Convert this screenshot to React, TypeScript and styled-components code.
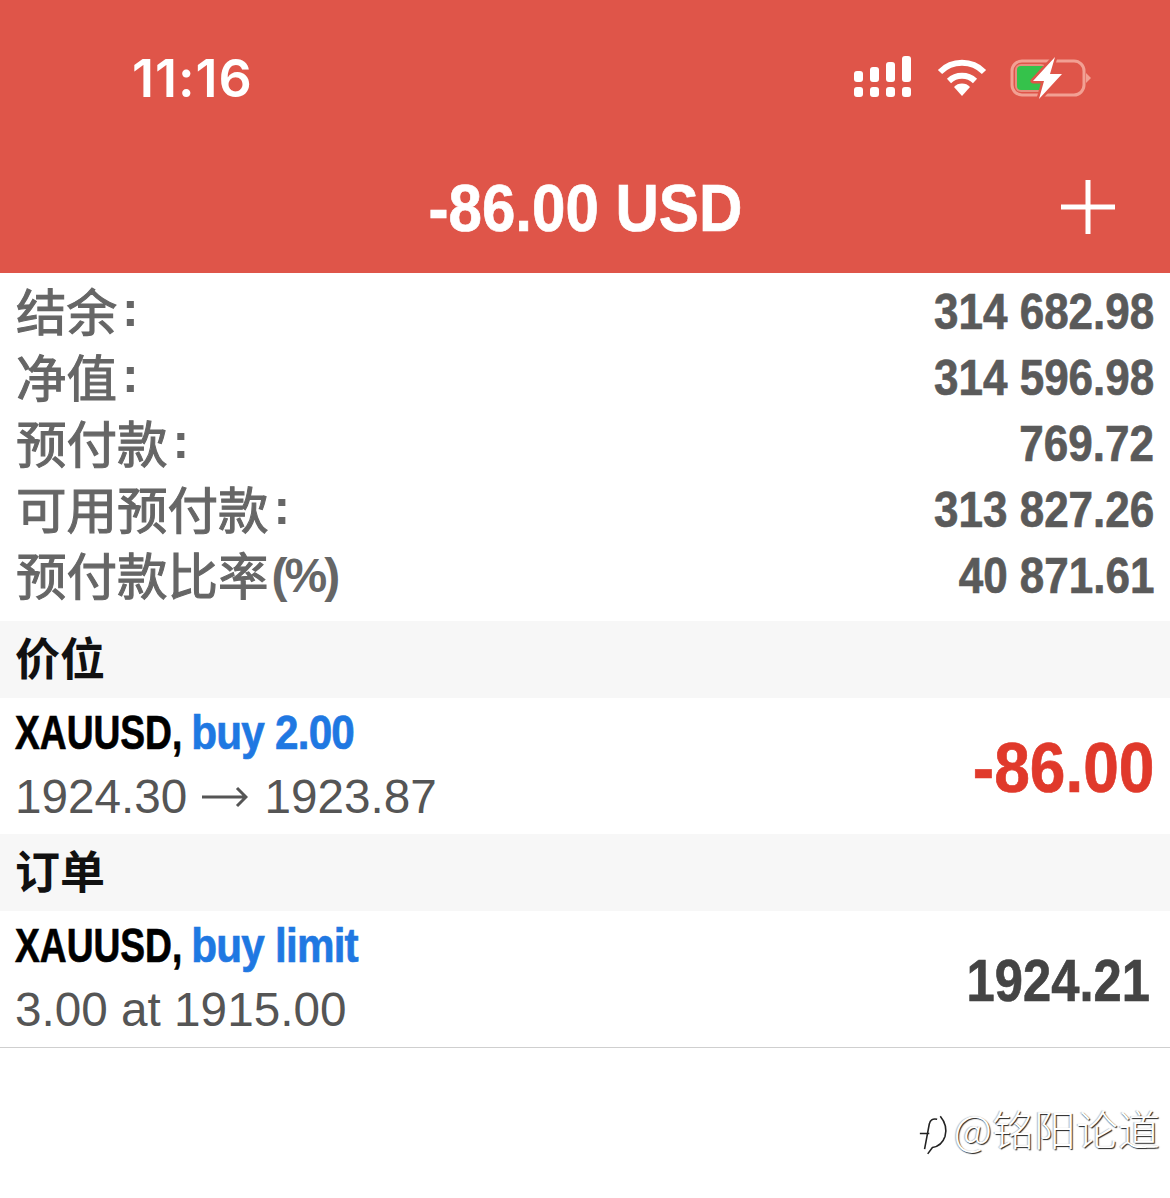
import styled, { createGlobalStyle } from 'styled-components';

const GlobalStyle = createGlobalStyle`
  html, body {
    margin: 0;
    padding: 0;
    background: #fff;
  }
  body {
    font-family: 'Liberation Sans', 'Noto Sans CJK SC', sans-serif;
  }
`;

const Page = styled.div`
  width: 1170px;
  height: 1198px;
  display: flex;
  flex-direction: column;
  overflow: hidden;
  position: relative;
  background: #fff;
`;

const Header = styled.header`
  height: 273px;
  background: #df5549;
  color: #fff;
  display: flex;
  flex-direction: column;
`;

const StatusBar = styled.div`
  height: 156px;
  display: flex;
  align-items: center;
  justify-content: space-between;
  padding: 0 78px 0 132px;
`;

const Clock = styled.span`
  font-size: 52px;
  font-weight: 600;
  font-family: Inter, 'Liberation Sans', sans-serif;
  letter-spacing: 1px;
`;

const StatusIcons = styled.div`
  display: flex;
  align-items: center;
  gap: 23px;
`;

const TitleBar = styled.div`
  flex: 1;
  display: flex;
  align-items: center;
  justify-content: center;
  position: relative;
  padding-bottom: 14px;
`;

const Squeezed = styled.span<{ $scale?: number; $origin?: string }>`
  display: inline-block;
  transform: scaleX(${(p) => p.$scale ?? 0.88});
  transform-origin: ${(p) => p.$origin ?? 'left'} center;
  white-space: nowrap;
  -webkit-text-stroke: 0.7px currentColor;
`;

const Title = styled(Squeezed)`
  font-size: 66px;
  font-weight: 700;
`;

const AddButton = styled.div`
  position: absolute;
  right: 55px;
  top: 24px;
  width: 54px;
  height: 54px;
`;

const Summary = styled.section`
  height: 348px;
  padding-top: 6px;
  box-sizing: border-box;
`;

const SummaryRow = styled.div`
  height: 66px;
  display: flex;
  align-items: center;
  justify-content: space-between;
  padding: 0 16px;
  color: #666;
`;

const SummaryLabel = styled.span`
  font-size: 50.5px;
  line-height: 60px;
  font-weight: 400;
  font-family: 'Noto Sans CJK SC', sans-serif;
  -webkit-text-stroke: 1.1px currentColor;
  margin-top: -6px;
  display: flex;
  align-items: center;
`;

const Colon = styled.span`
  font-family: 'Liberation Sans', sans-serif;
  font-size: 50px;
  font-weight: 700;
  margin-left: 5px;
  -webkit-text-stroke: 0;
`;

const Percent = styled.span`
  font-family: 'Liberation Sans', sans-serif;
  font-size: 48px;
  font-weight: 700;
  letter-spacing: -3px;
  margin-left: 3px;
  position: relative;
  top: 3px;
  -webkit-text-stroke: 0;
`;

const SummaryValue = styled(Squeezed)`
  font-size: 50px;
  font-weight: 700;
  color: #5a5a5a;
`;

const SectionHeader = styled.div`
  height: 77px;
  background: #f7f7f7;
  display: flex;
  align-items: center;
  padding: 0 15px 7px;
  box-sizing: border-box;
  font-size: 45px;
  font-weight: 700;
  font-family: 'Noto Sans CJK SC', sans-serif;
  color: #111;
`;

const Item = styled.div`
  height: 136px;
  display: flex;
  align-items: center;
  justify-content: space-between;
  padding: 0 16px;
  box-sizing: border-box;
`;

const ItemText = styled.div`
  display: flex;
  flex-direction: column;
  gap: 8px;
  margin-top: -3px;
`;

const ItemTitle = styled(Squeezed)`
  font-size: 48px;
  line-height: 56px;
  font-weight: 700;
  color: #000;
  margin-left: -1px;
`;

// the symbol is set narrower than the rest of its line
const Symbol = styled.span`
  display: inline-block;
  transform: scaleX(0.88);
  transform-origin: left center;
  margin-right: -29px;
`;

const Side = styled.span`
  color: #1f78e2;
  letter-spacing: -0.9px;
`;

const ItemDetail = styled.div`
  display: flex;
  align-items: center;
  font-size: 47.7px;
  line-height: 56px;
  color: #555;
  white-space: nowrap;
  margin-left: -1px;
`;

const ArrowIcon = styled.svg`
  margin: 0 16px 0 15px;
`;

const Profit = styled(Squeezed)`
  font-size: 70px;
  font-weight: 700;
  color: #e0392b;
  margin-top: 4px;
`;

const Price = styled(Squeezed)`
  font-size: 60px;
  font-weight: 700;
  color: #444;
  margin-right: 4px;
  margin-top: 2px;
`;

const Divider = styled.div`
  height: 1px;
  background: #cfcfcf;
`;

const Watermark = styled.div`
  position: absolute;
  right: 10px;
  top: 1097px;
  display: flex;
  align-items: flex-start;
  font-family: 'Noto Sans CJK SC', sans-serif;
  font-size: 42px;
  font-weight: 300;
  color: #fff;
  text-shadow: 1px 1px 1px #222, -1px 0 1px #bbb;
`;

const WatermarkLogo = styled.svg`
  margin-top: 16px;
`;

const summary: [string, boolean, string][] = [
  ['结余', true, '314 682.98'],
  ['净值', true, '314 596.98'],
  ['预付款', true, '769.72'],
  ['可用预付款', true, '313 827.26'],
  ['预付款比率', false, '40 871.61'],
];

const App = () => (
  <Page>
    <GlobalStyle />
    <Header>
      <StatusBar>
        <Clock>11:16</Clock>
        <StatusIcons>
          <svg width="60" height="44" viewBox="0 0 60 44" fill="#fff">
            <rect x="0" y="15" width="9" height="11" rx="3" />
            <rect x="16" y="11" width="9" height="15" rx="3" />
            <rect x="32" y="6" width="9" height="20" rx="3" />
            <rect x="48" y="0" width="9" height="26" rx="3" />
            <rect x="0" y="31" width="9" height="10" rx="3" />
            <rect x="16" y="31" width="9" height="10" rx="3" />
            <rect x="32" y="31" width="9" height="10" rx="3" />
            <rect x="48" y="31" width="9" height="10" rx="3" />
          </svg>
          <svg width="50" height="40" viewBox="0 0 50 40" fill="none" stroke="#fff" strokeWidth="6">
            <path d="M3 14 A31 31 0 0 1 47 14" />
            <path d="M12 23 A19 19 0 0 1 38 23" />
            <path d="M25 38 L17 29 A11 11 0 0 1 33 29 Z" fill="#fff" stroke="none" />
          </svg>
          <svg width="82" height="44" viewBox="0 0 82 44">
            <rect x="2" y="5" width="72" height="34" rx="10" fill="none" stroke="#f2a093" strokeWidth="3" />
            <rect x="5" y="8" width="32" height="28" rx="6" fill="#e98d7e" />
            <rect x="7" y="10" width="29" height="24" rx="4" fill="#35c24b" />
            <path d="M76 17 L81 22 L76 27 Z" fill="#f2a093" />
            <path
              d="M45 1 L23 25 L34 25 L29 43 L52 18 L40 18 Z"
              fill="#fff"
              stroke="#df5549"
              strokeWidth="5"
              paintOrder="stroke"
              strokeLinejoin="round"
            />
          </svg>
        </StatusIcons>
      </StatusBar>
      <TitleBar>
        <Title $origin="center" $scale={0.91}>-86.00 USD</Title>
        <AddButton>
          <svg width="54" height="54" viewBox="0 0 54 54" stroke="#fff" strokeWidth="5">
            <path d="M27 0 V54 M0 27 H54" />
          </svg>
        </AddButton>
      </TitleBar>
    </Header>
    <Summary>
      {summary.map(([label, hasColon, value]) => (
        <SummaryRow key={label}>
          <SummaryLabel>
            {label}
            {hasColon ? <Colon>:</Colon> : <Percent>(%)</Percent>}
          </SummaryLabel>
          <SummaryValue $origin="right">{value}</SummaryValue>
        </SummaryRow>
      ))}
    </Summary>
    <SectionHeader>价位</SectionHeader>
    <Item>
      <ItemText>
        <ItemTitle>
          <Symbol>XAUUSD,</Symbol> <Side>buy 2.00</Side>
        </ItemTitle>
        <ItemDetail>
          1924.30
          <ArrowIcon width="46" height="24" viewBox="0 0 46 24" fill="none" stroke="#555" strokeWidth="3">
            <path d="M0 12 H44 M35 3 L44 12 L35 21" />
          </ArrowIcon>
          1923.87
        </ItemDetail>
      </ItemText>
      <Profit $origin="right" $scale={0.915}>-86.00</Profit>
    </Item>
    <SectionHeader>订单</SectionHeader>
    <Item>
      <ItemText>
        <ItemTitle>
          <Symbol>XAUUSD,</Symbol> <Side>buy limit</Side>
        </ItemTitle>
        <ItemDetail>3.00 at 1915.00</ItemDetail>
      </ItemText>
      <Price $origin="right" $scale={0.845}>1924.21</Price>
    </Item>
    <Divider />
    <Watermark>
      <WatermarkLogo width="40" height="44" viewBox="0 0 40 56" fill="none" stroke="#222" strokeWidth="2">
        <path d="M2 26 H14 M8 46 L14 14 Q16 6 24 8 M28 4 Q38 16 34 30 Q30 42 18 44 L12 52" />
      </WatermarkLogo>
      @铭阳论道
    </Watermark>
  </Page>
);

export default App;
